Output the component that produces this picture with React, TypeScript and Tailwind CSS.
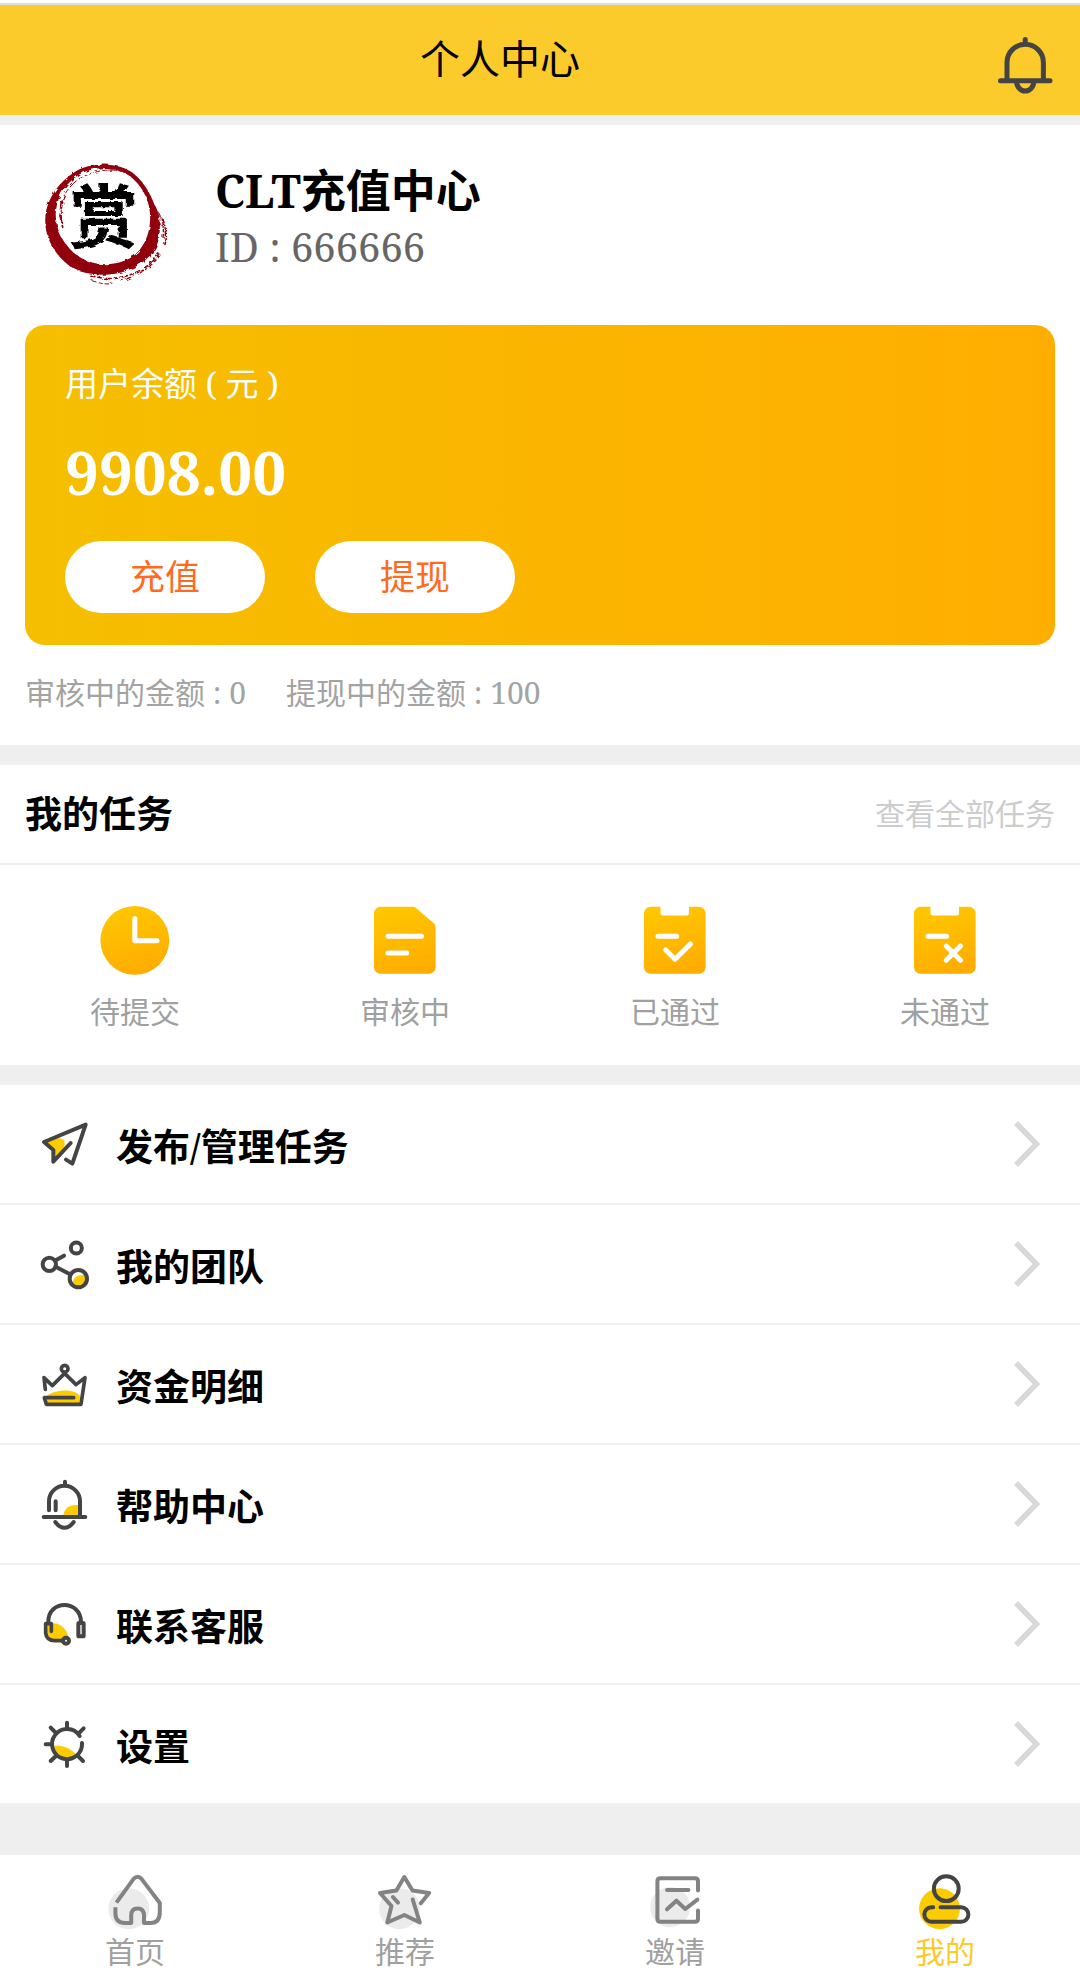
import type { ReactNode } from "react";

const DARK = "#444444";
const GOLD = "#fccb00";

function Avatar() {
  return (
    <svg viewBox="0 0 450 450" className="size-[150px] shrink-0" role="img" aria-label="头像">
      <defs>
        <filter id="brush" x="-10%" y="-10%" width="120%" height="120%">
          <feTurbulence type="fractalNoise" baseFrequency="0.06" numOctaves="3" seed="4" result="n" />
          <feDisplacementMap in="SourceGraphic" in2="n" scale="12" />
        </filter>
      </defs>
      <g filter="url(#brush)">
        <path
          fill="#91000f"
          fillRule="evenodd"
          d="M46 205C48 150 85 95 140 62C185 38 255 36 305 66C350 100 368 150 374 165C392 190 393 245 384 275C372 315 335 345 290 362C240 382 160 376 125 352C80 322 42 265 46 205ZM78 180C72 230 98 285 140 315C185 348 250 352 300 325C340 300 358 255 360 215C364 165 345 115 300 78C255 48 195 48 150 72C108 98 84 135 78 180Z"
        />
        <g fill="none" stroke="#91000f" strokeLinecap="round">
          <path d="M92 215C84 170 98 125 140 92C165 74 200 62 235 60" strokeWidth="3" strokeDasharray="26 8 12 10" />
          <path d="M98 232C90 195 92 165 104 142" strokeWidth="5" strokeDasharray="8 7 20 8" />
          <path d="M238 60C275 56 310 76 330 104" strokeWidth="4" strokeDasharray="22 7 9 6" />
          <path d="M384 186C400 212 402 238 399 262" strokeWidth="4" strokeDasharray="14 6 7 8" />
          <path d="M396 205C408 225 409 255 402 280" strokeWidth="5" strokeDasharray="5 6 12 7" />
          <path d="M386 312C365 345 325 372 270 382C240 390 208 384 180 376" strokeWidth="5" strokeDasharray="10 9 22 8" />
          <path d="M378 330C350 362 310 382 268 394" strokeWidth="4" strokeDasharray="6 9 14 10" />
          <path d="M186 392C215 402 232 404 246 400" strokeWidth="3" strokeDasharray="12 8" />
        </g>
      </g>
      <text
        x="222"
        y="280"
        textAnchor="middle"
        fontSize="208"
        fontWeight="700"
        fill="#000000"
        filter="url(#brush)"
        className="font-['Noto_Sans_CJK_SC',sans-serif]"
      >
        赏
      </text>
    </svg>
  );
}

function BellIcon() {
  return (
    <svg viewBox="0 0 60 60" className="size-[60px]" fill="none" stroke={DARK} strokeWidth="5" strokeLinecap="round">
      <path d="M30.2 4.5V9M12 45V27.5a18.2 18.2 0 0 1 36.4 0V45M5.5 45.7H55M21.6 46.5a8.6 9.5 0 0 0 17.2 0" />
    </svg>
  );
}

function TaskIcon({ id, children, shape }: { id: string; children: ReactNode; shape: string }) {
  return (
    <svg viewBox="0 0 80 80" className="size-[80px]">
      <defs>
        <linearGradient id={id} x1="0.3" y1="0" x2="0.6" y2="1">
          <stop offset="0" stopColor="#ffc700" />
          <stop offset="1" stopColor="#ffac00" />
        </linearGradient>
      </defs>
      <path d={shape} fill={`url(#${id})`} />
      <g fill="none" stroke="#ffffff" strokeWidth="5" strokeLinecap="round" strokeLinejoin="round">
        {children}
      </g>
    </svg>
  );
}

const BOARD =
  "M15.5 6.7H25.5V13a2.5 2.5 0 0 0 2.5 2.5H51.5a2.5 2.5 0 0 0 2.5-2.5V6.7H64a6.6 6.6 0 0 1 6.6 6.6V67.2a6.6 6.6 0 0 1-6.6 6.6H15.5A6.6 6.6 0 0 1 9 67.2V13.3A6.6 6.6 0 0 1 15.5 6.7Z";

const tasks = [
  {
    label: "待提交",
    icon: (
      <TaskIcon id="t1" shape="M39.8 6a34.4 34.4 0 1 1 0 68.8a34.4 34.4 0 1 1 0-68.8Z">
        <path d="M39.8 18.5V40.7H62" />
      </TaskIcon>
    ),
  },
  {
    label: "审核中",
    icon: (
      <TaskIcon
        id="t2"
        shape="M15.5 6.7H47.5Q49.6 6.7 51 8L69 23.5Q70.6 25 70.6 27V67.2a6.6 6.6 0 0 1-6.6 6.6H15.5A6.6 6.6 0 0 1 9 67.2V13.3A6.6 6.6 0 0 1 15.5 6.7Z"
      >
        <path d="M23 36.3H56.5M23 53H41.7" />
      </TaskIcon>
    ),
  },
  {
    label: "已通过",
    icon: (
      <TaskIcon id="t3" shape={BOARD}>
        <path d="M23 36.3H41.7M30.7 50L40 59.3L55.5 44" />
      </TaskIcon>
    ),
  },
  {
    label: "未通过",
    icon: (
      <TaskIcon id="t4" shape={BOARD}>
        <path d="M23 36.3H41.7M41.2 46L55.5 60.3M55.5 46L41.2 60.3" />
      </TaskIcon>
    ),
  },
];

function MenuIcon({ viewBox, children }: { viewBox: string; children: ReactNode }) {
  return (
    <svg
      viewBox={viewBox}
      className="size-[50px] shrink-0 overflow-visible"
      fill="none"
      stroke={DARK}
      strokeWidth="12"
      strokeLinecap="round"
      strokeLinejoin="round"
    >
      {children}
    </svg>
  );
}

const menu = [
  {
    label: "发布/管理任务",
    icon: (
      <MenuIcon viewBox="60 87 150 150">
        <path d="M78 158C95 145 118 140 132 150C140 168 125 190 106 204L102 180Z" fill={GOLD} stroke="none" />
        <path d="M152 159L100 215V180L72 156L197 104L157 221L138 209" />
      </MenuIcon>
    ),
  },
  {
    label: "我的团队",
    icon: (
      <MenuIcon viewBox="60 447 150 150">
        <path d="M158 580C158 562 176 552 195 556C198 574 188 590 172 588Z" fill={GOLD} stroke="none" />
        <circle cx="169" cy="474" r="16.5" />
        <circle cx="88" cy="523" r="20" />
        <circle cx="175" cy="566" r="26" />
        <path d="M107 511L132 497M107 530L150 553" />
      </MenuIcon>
    ),
  },
  {
    label: "资金明细",
    icon: (
      <MenuIcon viewBox="60 807 150 150">
        <path d="M80 918C100 900 160 892 180 918L178 942H80Z" fill={GOLD} stroke="none" />
        <circle cx="134" cy="836" r="10" strokeWidth="11" />
        <path d="M76 898L72 863L97 887L134 850L168 884L195 863L183 943H79L73 923H161" strokeWidth="11" />
      </MenuIcon>
    ),
  },
  {
    label: "帮助中心",
    icon: (
      <MenuIcon viewBox="60 147 150 150">
        <path d="M130 256C134 232 152 222 178 226V256Z" fill={GOLD} stroke="none" />
        <path d="M135 155V166M87 241V214A46 46 0 0 1 180 214V258M107 214V241M71 261H196M106 276C122 299 145 299 161 276" />
      </MenuIcon>
    ),
  },
  {
    label: "联系客服",
    icon: (
      <MenuIcon viewBox="60 507 150 150">
        <path d="M84 582C112 572 140 592 145 620L136 630H98C86 628 79 620 79 610Z" fill={GOLD} stroke="none" />
        <path d="M85 576C84 508 182 508 183 576" />
        <path d="M94 604V581H77V610C79 626 90 632 104 632H130" strokeWidth="11" />
        <rect x="175" y="579" width="16" height="40" rx="2" />
        <circle cx="138" cy="632" r="9" />
      </MenuIcon>
    ),
  },
  {
    label: "设置",
    icon: (
      <MenuIcon viewBox="60 867 150 150">
        <path d="M102 948C128 944 154 956 168 974C148 992 110 986 102 948Z" fill={GOLD} stroke="none" />
        <path d="M179 918A45 45 0 1 0 186 939" />
        <path d="M141 878V896M141 990V1008M77 943H95M92 893L108 909M191 895L176 910M92 993L108 978M189 993L175 979" />
      </MenuIcon>
    ),
  },
];

function TabIcon({ children, color }: { children: ReactNode; color: string }) {
  return (
    <svg
      viewBox="0 0 60 60"
      className="size-[60px]"
      fill="none"
      stroke={color}
      strokeWidth="4"
      strokeLinecap="round"
      strokeLinejoin="round"
    >
      {children}
    </svg>
  );
}

const tabs = [
  {
    label: "首页",
    active: false,
    icon: (
      <TabIcon color="#838383">
        <circle cx="23.8" cy="38.7" r="20.4" fill="#ebebeb" stroke="none" />
        <path
          strokeLinecap="butt"
          d="M11.4 32.7L28.6 8.9Q32.7 4.8 36.5 8.9L54.8 33V42Q54.8 53 45.5 53H39V45.5Q39 38.4 32.6 38.4Q26.2 38.4 26.2 45.5V53H20Q10.4 53 10.4 43V37.3"
        />
      </TabIcon>
    ),
  },
  {
    label: "推荐",
    active: false,
    icon: (
      <TabIcon color="#838383">
        <circle cx="24.5" cy="38.7" r="20.4" fill="#ebebeb" stroke="none" />
        <path d="M45.8 33.3L54.2 23L37.5 20.5L29.3 7L21.4 20.5L5 23L16.5 36L12.3 52.5L29.3 45L44.8 52.5L37.7 29.5M17.9 27L23 32.6" />
      </TabIcon>
    ),
  },
  {
    label: "邀请",
    active: false,
    icon: (
      <TabIcon color="#838383">
        <circle cx="25.2" cy="37" r="20" fill="#ebebeb" stroke="none" />
        <path d="M53 20.5V11.3Q53 8.3 50 8.3H15.4Q12.4 8.3 12.4 11.3V48.7Q12.4 51.7 15.4 51.7H50Q53 51.7 53 48.7V40.5M22 20H43.4M22 39.3L31.4 30.7L40.3 39L52.4 29.7" />
      </TabIcon>
    ),
  },
  {
    label: "我的",
    active: true,
    icon: (
      <TabIcon color={DARK}>
        <circle cx="24.5" cy="38.7" r="20.4" fill={GOLD} stroke="none" />
        <circle cx="31.3" cy="18.7" r="12.4" />
        <path d="M18.2 37.3H16.5a7.2 7.2 0 0 0 0 14.4H46.2a7.2 7.2 0 0 0 0-14.4H25.5" />
      </TabIcon>
    ),
  },
];

export default function App() {
  return (
    <div className="flex min-h-screen flex-col bg-[#efefef] font-['Noto_Serif','Liberation_Serif','Noto_Sans_CJK_SC',serif] text-black">
      <header className="mb-[10px] border-t-[3px] border-white">
        <div className="flex h-[112px] items-center border-t-2 border-[#dedede] bg-[#fbca2b] pr-[25px] pl-[5px]">
          <h1 className="flex-1 pb-[2px] text-center text-[40px] leading-[60px]">个人中心</h1>
          <button type="button" aria-label="消息" className="mt-[10px]">
            <BellIcon />
          </button>
        </div>
      </header>

      <section className="bg-white px-[25px]">
        <div className="flex h-[200px] items-center gap-[35px] pl-[5px]">
          <Avatar />
          <div className="pb-[12px]">
            <h2 className="text-[45px] leading-[56px] font-bold">CLT充值中心</h2>
            <p className="text-[40px] leading-[56px] text-[#666666]">ID : 666666</p>
          </div>
        </div>

        <div className="rounded-[20px] bg-linear-to-r from-[#f5bf00] via-[#fbb500] to-[#ffae00] px-[40px] pt-[35px] pb-[32px] text-white">
          <p className="text-[33px] leading-[48px]">用户余额 ( 元 )</p>
          <p className="mt-[20px] text-[60px] leading-[88px] font-bold">9908.00</p>
          <div className="mt-[25px] flex gap-[50px] text-[35px] leading-[52px] text-[#ff6a1f]">
            <button type="button" className="h-[72px] w-[200px] rounded-full bg-white">
              充值
            </button>
            <button type="button" className="h-[72px] w-[200px] rounded-full bg-white">
              提现
            </button>
          </div>
        </div>

        <div className="flex h-[100px] items-center gap-[40px] pb-[4px] text-[30px] leading-[44px] text-[#a3a3a3]">
          <span>审核中的金额 : 0</span>
          <span>提现中的金额 : 100</span>
        </div>
      </section>

      <section className="mt-[20px] bg-white">
        <div className="flex h-[100px] items-center justify-between border-b-2 border-[#efefef] px-[25px]">
          <h2 className="text-[37px] leading-[54px] font-bold">我的任务</h2>
          <a href="#tasks" className="text-[30px] leading-[44px] text-[#cccccc]">
            查看全部任务
          </a>
        </div>
        <div className="grid h-[200px] grid-cols-4 pt-[35px]">
          {tasks.map((t) => (
            <a key={t.label} href="#tasks" className="flex flex-col items-center">
              {t.icon}
              <span className="mt-[10px] text-[30px] leading-[44px] text-[#a0a0a0]">{t.label}</span>
            </a>
          ))}
        </div>
      </section>

      <nav className="mt-[20px] bg-white">
        {menu.map((m) => (
          <a
            key={m.label}
            href="#menu"
            className="flex h-[120px] items-center border-b-2 border-[#efefef] px-[40px]"
          >
            {m.icon}
            <span className="flex-1 pt-[6px] pl-[26px] text-[37px] leading-[54px] font-bold">{m.label}</span>
            <svg viewBox="0 0 26 46" className="h-[46px] w-[26px]" fill="none" stroke="#d9d9d9" strokeWidth="5.5">
              <path d="M2 2L22.5 23L2 44" />
            </svg>
          </a>
        ))}
      </nav>

      <footer className="sticky bottom-0 mt-auto grid h-[127px] grid-cols-4 bg-white pt-[15px]">
        {tabs.map((t) => (
          <a
            key={t.label}
            href="#tab"
            aria-current={t.active ? "page" : undefined}
            className={`flex flex-col items-center text-[30px] leading-[44px] ${t.active ? "text-[#fbca2b]" : "text-[#a0a0a0]"}`}
          >
            {t.icon}
            {t.label}
          </a>
        ))}
      </footer>
    </div>
  );
}
